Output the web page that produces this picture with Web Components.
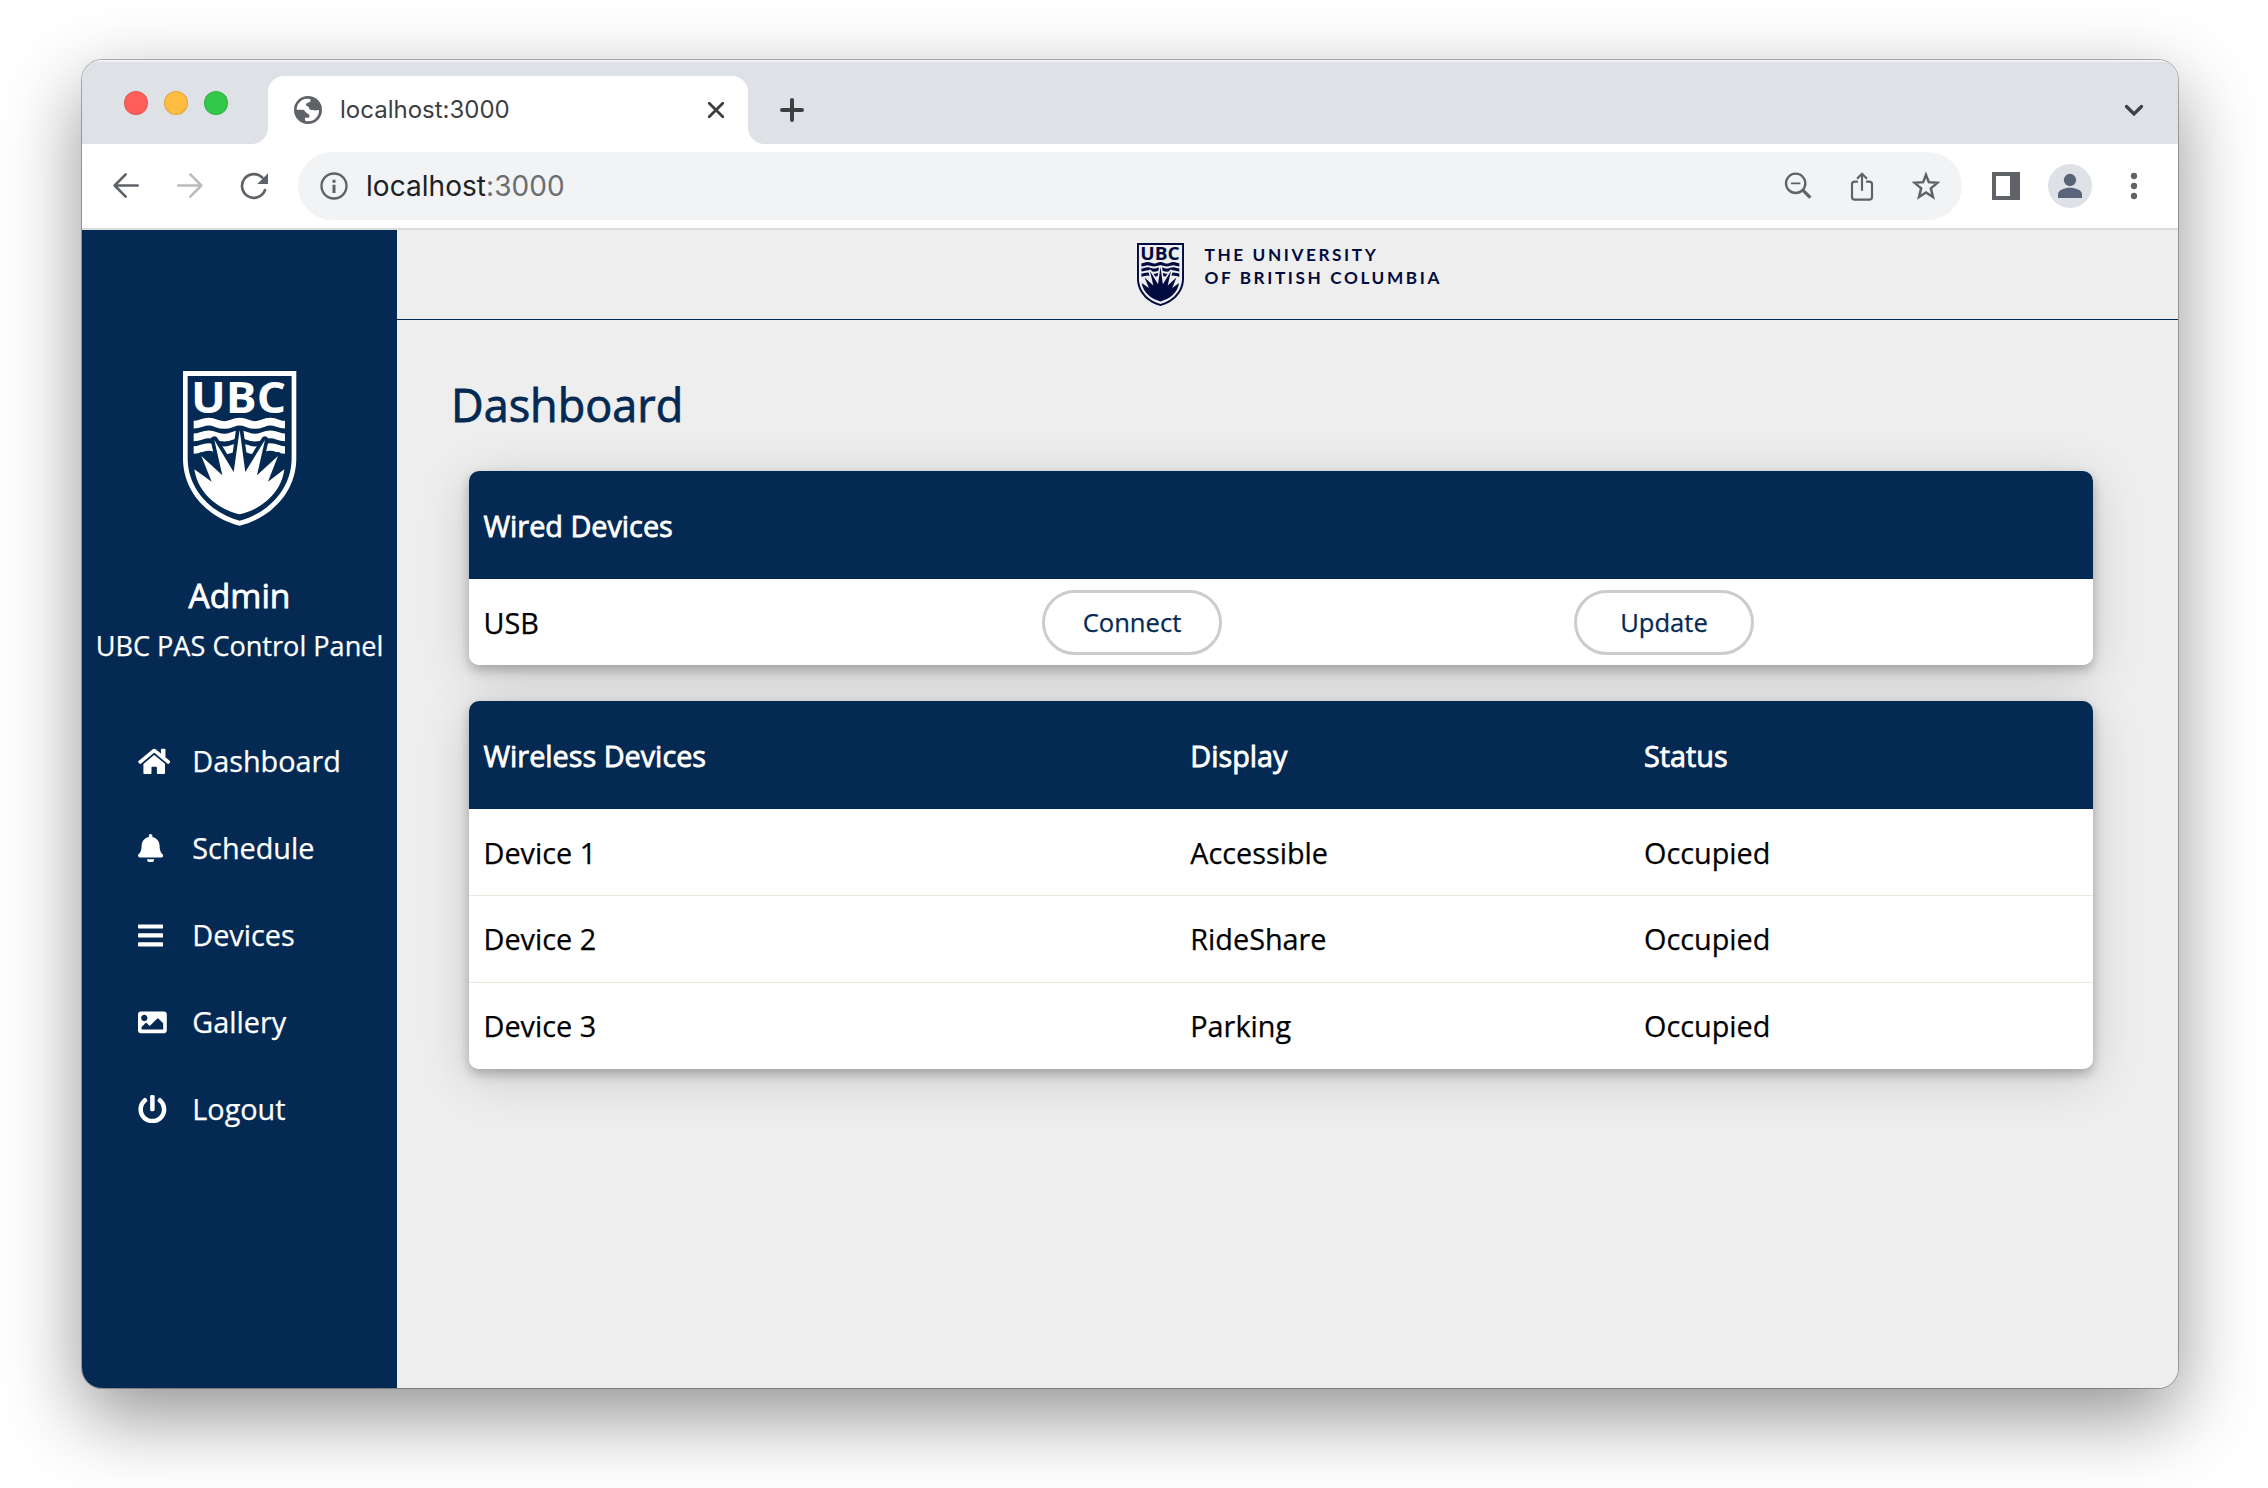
<!DOCTYPE html>
<html lang="en">
<head>
<meta charset="utf-8">
<title>localhost:3000</title>
<style>
html,body{margin:0;height:100%;background:#fff}
body{width:2268px;height:1488px;overflow:hidden;display:flex;font-family:"Open Sans","Noto Sans",sans-serif;--navy:#042a54;--page:#eee}
</style>
</head>
<body>
<browser-window>
  <tab-strip slot="tabs">localhost:3000</tab-strip>
  <tool-bar slot="toolbar"><span>localhost</span><span slot="port">:3000</span></tool-bar>
  <side-bar slot="page">
    <nav-item icon="home">Dashboard</nav-item>
    <nav-item icon="bell">Schedule</nav-item>
    <nav-item icon="bars">Devices</nav-item>
    <nav-item icon="image">Gallery</nav-item>
    <nav-item icon="power">Logout</nav-item>
  </side-bar>
  <main-panel slot="page" heading="Dashboard">
    <device-card class="wired">
      <device-row head><span>Wired Devices</span></device-row>
      <device-row cols="573px 532px auto"><span>USB</span><pill-button>Connect</pill-button><pill-button>Update</pill-button></device-row>
    </device-card>
    <device-card>
      <device-row head><span>Wireless Devices</span><span>Display</span><span>Status</span></device-row>
      <device-row line><span>Device 1</span><span>Accessible</span><span>Occupied</span></device-row>
      <device-row line="mid"><span>Device 2</span><span>RideShare</span><span>Occupied</span></device-row>
      <device-row last><span>Device 3</span><span>Parking</span><span>Occupied</span></device-row>
    </device-card>
  </main-panel>
</browser-window>
<script>
const define = (name, html) => customElements.define(name, class extends HTMLElement {
  constructor() {
    super();
    const t = document.createElement('template');
    t.innerHTML = typeof html === 'function' ? html(this) : html;
    this.attachShadow({mode: 'open'}).appendChild(t.content.cloneNode(true));
  }
});

define('browser-window', `<style>
:host{display:flex;flex-direction:column;box-sizing:border-box;margin:60px 0 0 82px;width:2096px;height:1328px;flex:none;border-radius:20px;
box-shadow:0 0 0 1px rgba(0,0,0,.28),0 28px 78px rgba(0,0,0,.43);background:var(--page)}
.clip{display:flex;flex-direction:column;flex:1;border-radius:20px;overflow:hidden}
.page{display:flex;flex:1}
</style><div class="clip"><slot name="tabs"></slot><slot name="toolbar"></slot><div class="page"><slot name="page"></slot></div></div>`);

define('tab-strip', `<style>
:host{display:flex;box-sizing:border-box;height:84px;background:#dee1e6;box-shadow:inset 0 2px 0 rgba(255,255,255,.55);padding:0 28px 0 42px;font:24px Inter,sans-serif;color:#3c4043}
.lights{display:flex;gap:16px;margin:31px 40px 0 0}
i{width:24px;height:24px;border-radius:50%;box-sizing:border-box;border:1px solid rgba(0,0,0,.12)}
.tab{display:flex;align-items:center;box-sizing:border-box;width:480px;height:68px;margin-top:16px;padding:0 22px 0 26px;background:#fff;border-radius:16px 16px 0 0}
.foot{width:16px;height:16px;align-self:flex-end;margin:0 0 0 -16px;background:radial-gradient(circle at 0 0,transparent 15.5px,#fff 16.2px)}
.foot.r{margin:0;background:radial-gradient(circle at 100% 0,transparent 15.5px,#fff 16.2px)}
.t{margin-left:18px;flex:1;letter-spacing:0;padding-bottom:1px}
svg{display:block;flex:none}
.plus{margin:34px 0 0 12px}.chev{margin:34px 0 0 auto}
</style>
<div class="lights"><i style="background:#fe5f5a"></i><i style="background:#febc40"></i><i style="background:#34c84a"></i></div>
<div class="foot"></div>
<div class="tab">
<svg width="28" height="28" viewBox="702 168 84 84"><circle cx="744" cy="210" r="42" fill="#5f6368"/><path fill="#fff" d="M710 209C710 191 723 177 741 176Q752 176 752 180C752 189 738 187 738 194C738 199 746 198 747 203C748 211 754 209 759 210C765 213 770 210 777 210C778 229 763 244 745 244Q735 244 735 240V233H745C751 233 748 223 744 221C737 219 734 209 729 209Z"/></svg>
<span class="t"><slot></slot></span>
<svg width="20" height="20" viewBox="0 0 20 20" stroke="#3c4043" stroke-width="2.8" stroke-linecap="round"><path d="M3.2 3.2 16.8 16.8M16.8 3.2 3.2 16.8"/></svg>
</div><div class="foot r"></div>
<svg class="plus" width="32" height="32" viewBox="0 0 32 32" stroke="#3c4043" stroke-width="4" stroke-linecap="round"><path d="M6 16H26M16 6V26"/></svg>
<svg class="chev" width="32" height="32" viewBox="0 0 32 32" fill="none" stroke="#3c4043" stroke-width="3.200" stroke-linecap="round"><path d="M8.5 12.5 16 20 23.5 12.5"/></svg>`);

define('tool-bar', `<style>
:host{display:flex;align-items:center;box-sizing:border-box;height:86px;padding:0 28px;background:#fff;border-bottom:2px solid #dadbdc;font:28px Inter,sans-serif;color:#202124}
svg{display:block;flex:none}
.nav{display:flex;gap:32px;margin-right:28px}
.box{display:flex;align-items:center;box-sizing:border-box;flex:1;height:68px;border-radius:34px;background:#f1f3f4;padding:0 20px}
.url{margin-left:16px;flex:1;letter-spacing:.05px}
.port{color:#6b6e71}
.acts{display:flex;gap:32px}
.side{display:flex;align-items:center;gap:26px;margin-left:28px}
</style>
<div class="nav">
<svg width="32" height="32" viewBox="150 390 96 96" fill="none" stroke="#5f6368" stroke-width="8" stroke-linecap="round" stroke-linejoin="round"><path d="M233 436.500H164M197 403 164 436.500 197 470"/></svg>
<svg width="32" height="32" viewBox="342 390 96 96" fill="none" stroke="#bbbcbf" stroke-width="8" stroke-linecap="round" stroke-linejoin="round"><path d="M355 436.500H424M391 403 424 436.500 391 470"/></svg>
<svg width="32" height="32" viewBox="534 390 96 96" fill="none" stroke="#5f6368" stroke-width="8"><path d="M607 413A35.5 35.5 0 1 0 615 450" stroke-linecap="round"/><path d="M624 400V432H592Z" fill="#5f6368" stroke="none"/></svg>
</div>
<div class="box">
<svg width="32" height="32" viewBox="775 391 96 96" fill="none" stroke="#5f6368" stroke-width="7"><circle cx="823" cy="439" r="37.5"/><path d="M823 435V460M823 420V429" stroke-width="9"/></svg>
<span class="url"><slot></slot><span class="port"><slot name="port"></slot></span></span>
<div class="acts">
<svg width="32" height="32" viewBox="125 330 96 96" fill="none" stroke="#5f6368" stroke-width="7"><circle cx="166" cy="370" r="29"/><path d="M188 391 210 413" stroke-width="10"/><path d="M152 370H180" stroke-width="5"/></svg>
<svg width="32" height="32" viewBox="318 330 96 96" fill="none" stroke="#5f6368" stroke-width="6.500"><path d="M354 365H344Q336 365 336 373V411Q336 419 344 419H388Q396 419 396 411V373Q396 365 388 365H378M366 392V342"/><path d="M351 356 366 341 381 356"/></svg>
<svg width="32" height="32" viewBox="510 330 96 96" fill="none" stroke="#5f6368" stroke-width="7.500"><path d="M558 344.500 566.500 366.500 592 368.500 572.500 385 579 411 558 397.500 537 411 543.500 385 524 368.500 549.500 366.500Z"/></svg>
</div></div>
<div class="side">
<svg width="32" height="32" viewBox="750 330 96 96"><path fill="#5f6368" fill-rule="evenodd" d="M756 336H840V420H756ZM768 348V408H810V348Z"/></svg>
<svg width="44" height="44" viewBox="924 312 132 132"><circle cx="990" cy="378" r="66" fill="#dee1e6"/><g fill="#5a6478"><circle cx="990" cy="360" r="18.500"/><path d="M954 414V402C954 390 974 383 990 383S1026 390 1026 402V414Z"/></g></svg>
<svg width="32" height="32" viewBox="1134 330 96 96" fill="#5f6368"><circle cx="1182" cy="348" r="9.500"/><circle cx="1182" cy="378" r="9.500"/><circle cx="1182" cy="408" r="9.500"/></svg>
</div>`);

const wave = 'M342 224C364 224 366 215 387 215S412 225 434 225 458 215 480 215 504 225 526 225 550 215 572 215 594 224 616 224';
define('ubc-shield', `<style>
:host{display:block;flex:none;color:#fff}
svg{display:block;width:100%;height:100%;overflow:visible}
text{font:700 131px "Open Sans",sans-serif}
</style>
<svg viewBox="310 63 340 464" preserveAspectRatio="none">
<text x="334" y="190" textLength="285" lengthAdjust="spacingAndGlyphs" fill="currentColor">UBC</text>
<g fill="none" stroke="currentColor" stroke-width="23"><path d="${wave}"/><path transform="translate(0 38)" d="${wave}"/><path transform="translate(0 76)" d="${wave}"/></g>
<path d="M480 240 497 366 556 270 532 376 595 318 565 395 614 358C605 430 545 478 480 493 415 478 355 430 344 358L396 395 365 318 428 376 404 270 462 366Z" fill="currentColor" stroke="var(--ground)" stroke-width="22" stroke-linejoin="round" paint-order="stroke"/>
<path fill="currentColor" fill-rule="evenodd" d="M310 63H650V325C650 430 570 505 480 527 390 505 310 430 310 325ZM324 78V325C324 418 395 490 480 512 565 490 636 418 636 325V78Z"/>
</svg>`);

define('side-bar', `<style>
:host{display:flex;flex-direction:column;align-items:center;box-sizing:border-box;width:315px;flex:none;padding-top:141px;background:var(--navy);color:#fff}
ubc-shield{width:113.300px;height:154.700px;--ground:var(--navy)}
.name{margin-top:44.300px;font-size:33.600px;line-height:50px;-webkit-text-stroke:.8px #fff}
.panel{font-size:27.100px;line-height:50px;padding-top:1px;white-space:nowrap;-webkit-text-stroke:.25px #fff}
nav{display:flex;flex-direction:column;align-self:stretch;margin-top:46px}
</style><ubc-shield></ubc-shield><div class="name">Admin</div><div class="panel">UBC PAS Control Panel</div><nav><slot></slot></nav>`);

const icons = {
  home: [576, 'M280.370 148.260L96 300.110V464a16 16 0 0 0 16 16l112.060-.29a16 16 0 0 0 15.920-16V368a16 16 0 0 1 16-16h64a16 16 0 0 1 16 16v95.640a16 16 0 0 0 16 16.050L464 480a16 16 0 0 0 16-16V300L295.670 148.260a12.190 12.190 0 0 0-15.300 0zM571.600 251.470L488 182.560V44.050a12 12 0 0 0-12-12h-56a12 12 0 0 0-12 12v72.610L318.470 43a48 48 0 0 0-61 0L4.340 251.470a12 12 0 0 0-1.600 16.900l25.500 31A12 12 0 0 0 45.150 301l235.220-193.740a12.190 12.190 0 0 1 15.300 0L530.900 301a12 12 0 0 0 16.900-1.600l25.500-31a12 12 0 0 0-1.700-16.930z'],
  bell: [448, 'M224 512c35.320 0 63.970-28.650 63.970-64H160.030c0 35.350 28.650 64 63.970 64zm215.390-149.710c-19.320-20.760-55.470-51.990-55.470-154.290 0-77.700-54.480-139.900-127.940-155.160V32c0-17.670-14.320-32-31.980-32s-31.980 14.330-31.980 32v20.840C118.560 68.100 64.080 130.300 64.080 208c0 102.300-36.150 133.530-55.470 154.290-6 6.450-8.660 14.160-8.610 21.710.11 16.400 12.980 32 32.100 32h383.800c19.120 0 32-15.600 32.100-32 .05-7.550-2.610-15.270-8.610-21.710z'],
  bars: [448, 'M16 132h416a16 16 0 0 0 16-16V76a16 16 0 0 0-16-16H16A16 16 0 0 0 0 76v40a16 16 0 0 0 16 16zm0 160h416a16 16 0 0 0 16-16v-40a16 16 0 0 0-16-16H16a16 16 0 0 0-16 16v40a16 16 0 0 0 16 16zm0 160h416a16 16 0 0 0 16-16v-40a16 16 0 0 0-16-16H16a16 16 0 0 0-16 16v40a16 16 0 0 0 16 16z'],
  image: [512, 'M464 448H48c-26.510 0-48-21.490-48-48V112c0-26.510 21.490-48 48-48h416c26.510 0 48 21.490 48 48v288c0 26.510-21.490 48-48 48zM112 120c-30.928 0-56 25.072-56 56s25.072 56 56 56 56-25.072 56-56-25.072-56-56-56zM64 384h384V272l-87.515-87.515c-4.686-4.686-12.284-4.686-16.971 0L208 320l-55.515-55.515c-4.686-4.686-12.284-4.686-16.971 0L64 336v48z'],
  power: [512, 'M400 54.100c63 45 104 118.600 104 201.900 0 136.800-110.800 247.700-247.500 248C120 504.300 8.200 393 8 256.400 7.900 173.100 48.900 99.300 111.800 54.200c11.700-8.300 28-4.800 35 7.700L162.600 90c5.900 10.500 3.100 23.800-6.600 31-41.500 30.800-68 79.600-68 134.900-.1 92.300 74.500 168.100 168 168.100 91.600 0 168.600-74.200 168-169.100-.3-51.800-24.700-101.800-68.100-134-9.700-7.200-12.400-20.500-6.500-30.900l15.800-28.100c7-12.400 23.200-16.100 34.800-7.800zM296 264V24c0-13.300-10.700-24-24-24h-32c-13.300 0-24 10.700-24 24v240c0 13.300 10.700 24 24 24h32c13.300 0 24-10.700 24-24z']
};
define('nav-item', el => {
  const [w, d] = icons[el.getAttribute('icon')];
  return `<style>
:host{display:flex;align-items:center;height:87px;padding-left:56px;font-size:28.800px;color:#fff;-webkit-text-stroke:.25px #fff}
.i{width:54.300px;flex:none;padding-top:1px}svg{display:block;height:28.800px;width:${w * 28.8 / 512}px}
</style><span class="i"><svg viewBox="0 0 ${w} 512" fill="currentColor"><path d="${d}"/></svg></span><slot></slot>`;
});

define('site-header', `<style>
:host{display:flex;justify-content:center;box-sizing:border-box;height:90px;padding-top:13px;border-bottom:1px solid var(--navy);color:#020b40}
ubc-shield{width:47px;height:63px;color:#020b40;--ground:var(--page)}
.w{display:flex;flex-direction:column;width:234px;margin-left:21px;font:700 17.200px/23px Lato,sans-serif;white-space:nowrap;letter-spacing:2.600px}
</style><ubc-shield></ubc-shield><div class="w"><span>THE UNIVERSITY</span><span>OF BRITISH COLUMBIA</span></div>`);

define('main-panel', el => `<style>
:host{display:flex;flex-direction:column;flex:1;background:var(--page)}
h1{margin:55px 0 36px 54px;font-size:45px;line-height:60px;font-weight:400;color:var(--navy);-webkit-text-stroke:.8px var(--navy)}
.cards{display:flex;flex-direction:column;gap:36px;margin:0 85px 0 72px}
</style><site-header></site-header><h1>${el.getAttribute('heading')}</h1><div class="cards"><slot></slot></div>`);

define('device-card', `<style>
:host{display:block;border-radius:10px;box-shadow:0 10px 52px rgba(0,0,0,.15),0 5px 12px rgba(0,0,0,.26)}
.c{display:flex;flex-direction:column;border-radius:10px;overflow:hidden;background:#fff}
</style><div class="c"><slot></slot></div>`);

define('device-row', el => `<style>
:host{display:grid;grid-template-columns:${el.getAttribute('cols') || '721.300px 453.700px auto'};align-items:center;box-sizing:border-box;height:86px;font-size:28.800px;color:#000;-webkit-text-stroke:.25px currentColor}
:host([line]){height:87px;border-bottom:1px solid #e6ebdc}
:host([line=mid]){padding-bottom:2px}
:host([last]){padding-bottom:2px}
:host([head]){height:108px;background:var(--navy);color:#fff;-webkit-text-stroke:.8px #fff}
::slotted(span:first-child){padding-left:14.500px}
</style><slot></slot>`);

define('pill-button', `<style>
:host{display:flex;align-items:center;justify-content:center;box-sizing:border-box;width:180px;height:65px;border:3px solid #ccc;border-radius:33px;background:#fff;color:var(--navy);font-size:25.600px;-webkit-text-stroke:.25px var(--navy)}
</style><slot></slot>`);
</script>
</body>
</html>
